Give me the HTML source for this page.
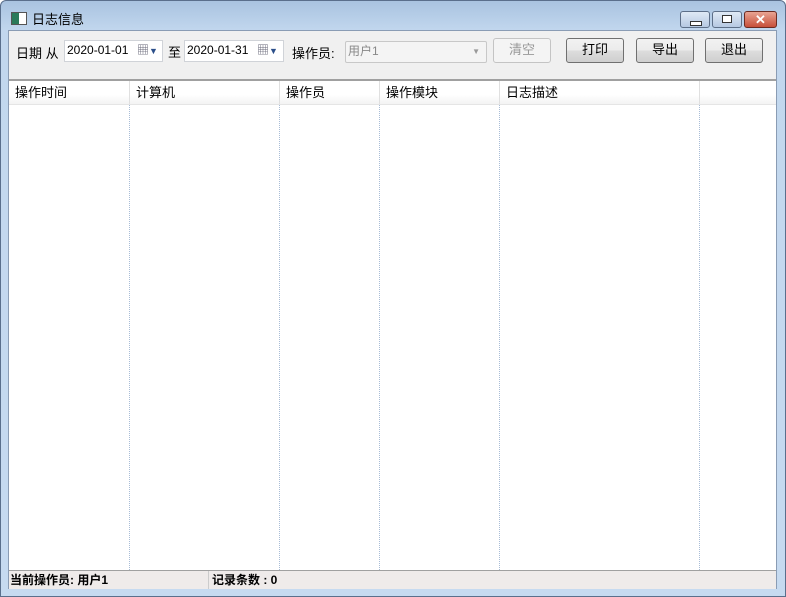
<!DOCTYPE html><html><head><style>
body{margin:0;width:786px;height:597px;overflow:hidden;font-family:"Liberation Sans","Noto Sans CJK SC",sans-serif;font-size:12px;}
.win{position:absolute;left:0;top:0;width:784px;height:595px;border:1px solid #5a6f8c;border-radius:6px 6px 0 0;background:linear-gradient(#a9c3e0,#c2d7ee 30px,#c6daf0);}
.abs{position:absolute}
.client{position:absolute;left:8px;top:30px;width:769px;height:559px;background:#f0f0f0;border:1px solid #8a9cb4;box-sizing:border-box}
.inp{position:absolute;background:#fff;border:1px solid #d0d3d8;box-sizing:border-box;height:22px;line-height:19px;padding-left:2px}
.btn{position:absolute;border:1px solid #707070;border-radius:3px;box-sizing:border-box;background:linear-gradient(#f2f2f2,#ebebeb 50%,#dddddd 51%,#cfcfcf);text-align:center;line-height:22px;font-size:13px}
.col{position:absolute;top:0;bottom:0;border-left:1px dotted #a8bcd6}
.hd{position:absolute;top:0;height:23px;line-height:24px;padding-left:6px;font-size:13px;border-right:1px solid #e0e0e0;box-sizing:border-box}
</style></head><body>
<div class="win">
<div class="abs" style="left:10px;top:11px;width:14px;height:11px;border:1px solid #555;background:linear-gradient(90deg,#2a7a5a 50%,#fff 50%)"></div>
<div class="abs" style="left:31px;top:8px;font-size:13px;color:#000">日志信息</div>
<div class="abs" style="left:679px;top:10px;width:30px;height:17px;border:1px solid #5d6f88;border-radius:3px;box-sizing:border-box;background:linear-gradient(#dfe9f5,#b6c9e2)"><div class="abs" style="left:9px;top:9px;width:10px;height:3px;border:1px solid #333;background:#fff"></div></div>
<div class="abs" style="left:711px;top:10px;width:30px;height:17px;border:1px solid #5d6f88;border-radius:3px;box-sizing:border-box;background:linear-gradient(#dfe9f5,#b6c9e2)"><div class="abs" style="left:9px;top:3px;width:8px;height:6px;border:1px solid #333;background:#fff"></div></div>
<div class="abs" style="left:743px;top:10px;width:33px;height:17px;border:1px solid #6b2b22;border-radius:3px;box-sizing:border-box;background:linear-gradient(#e8a493,#c74f3a);color:#fff;text-align:center;font-weight:bold;line-height:15px;font-size:13px">✕</div>
</div>
<div class="client">
<div class="abs" style="left:7px;top:12px;font-size:13px">日期&nbsp;从</div>
<div class="inp" style="left:55px;top:9px;width:99px">2020-01-01<span class="abs" style="left:72px;top:0;color:#667">▦<span style="color:#2c4f8a;font-size:9px">▼</span></span></div>
<div class="abs" style="left:159px;top:11px;font-size:13px">至</div>
<div class="inp" style="left:175px;top:9px;width:100px">2020-01-31<span class="abs" style="left:72px;top:0;color:#667">▦<span style="color:#2c4f8a;font-size:9px">▼</span></span></div>
<div class="abs" style="left:283px;top:12px;font-size:13px">操作员:</div>
<div class="inp" style="left:336px;top:10px;width:142px;border-radius:2px;border-color:#c8c8c8;color:#888;background:#f4f4f4">用户1<span class="abs" style="right:6px;top:0;font-size:8px;color:#999">▼</span></div>
<div class="btn" style="left:484px;top:7px;width:58px;height:25px;border-color:#c4c4c4;background:#f4f4f4;color:#999">清空</div>
<div class="btn" style="left:557px;top:7px;width:58px;height:25px">打印</div>
<div class="btn" style="left:627px;top:7px;width:58px;height:25px">导出</div>
<div class="btn" style="left:696px;top:7px;width:58px;height:25px">退出</div>
<div class="abs" style="left:0;top:48px;width:767px;height:491px;background:#fff;border-top:2px solid #a0a0a0">
 <div class="abs" style="left:0;top:0;width:767px;height:23px;background:linear-gradient(#fff,#fff 60%,#f3f3f3);border-bottom:1px solid #e5e5e5">
  <div class="hd" style="left:0;width:121px">操作时间</div><div class="hd" style="left:121px;width:150px">计算机</div><div class="hd" style="left:271px;width:100px">操作员</div><div class="hd" style="left:371px;width:120px">操作模块</div><div class="hd" style="left:491px;width:200px">日志描述</div>
 </div>
 <div class="abs" style="left:0;top:24px;width:767px;bottom:0">
  <div class="col" style="left:120px"></div><div class="col" style="left:270px"></div><div class="col" style="left:370px"></div><div class="col" style="left:490px"></div><div class="col" style="left:690px"></div>
 </div>
</div>
<div class="abs" style="left:0;top:539px;width:767px;height:18px;background:#efebea;border-top:1px solid #a0a0a0;font-weight:bold;line-height:18px">
 <span class="abs" style="left:1px">当前操作员: 用户1</span>
 <div class="abs" style="left:199px;top:0;height:18px;border-left:1px solid #ccc"></div>
 <span class="abs" style="left:203px">记录条数 : 0</span>
</div>
</div>
</body></html>
